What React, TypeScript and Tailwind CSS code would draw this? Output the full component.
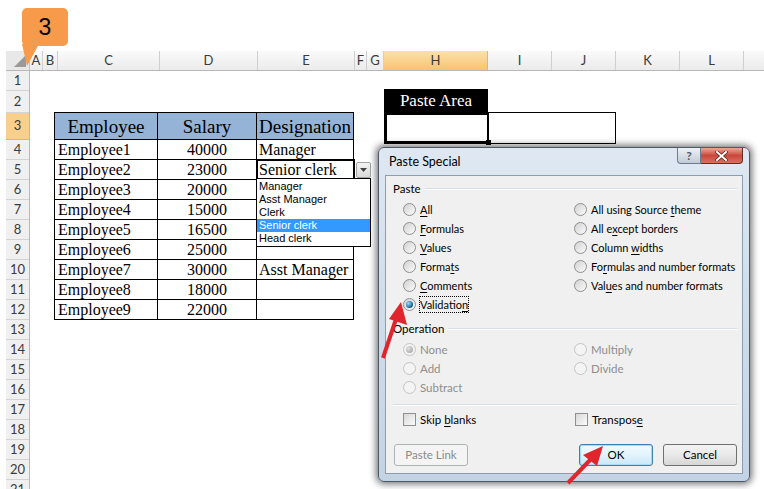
import React from "react";

const COLS = [
  { n: "A", w: "w-[13px]" },
  { n: "B", w: "w-[15px]" },
  { n: "C", w: "w-[102px]" },
  { n: "D", w: "w-[98px]" },
  { n: "E", w: "w-[97px]" },
  { n: "F", w: "w-[12px]" },
  { n: "G", w: "w-[17px]" },
  { n: "H", w: "w-[104px]", active: true },
  { n: "I", w: "w-[64px]" },
  { n: "J", w: "w-[64px]" },
  { n: "K", w: "w-[64px]" },
  { n: "L", w: "w-[64px]" },
  { n: "", w: "w-[64px]" }, // M lies past the right edge
];

const ROWS = [
  { n: 1, h: "h-[20px]" },
  { n: 2, h: "h-[22px]" },
  { n: 3, h: "h-[27px]", active: true },
  ...Array.from({ length: 18 }, (_, i) => ({ n: i + 4, h: "h-[20px]", active: false })),
];

const EMPLOYEES = [
  { name: "Employee1", salary: "40000", role: "Manager" },
  { name: "Employee2", salary: "23000", role: "Senior clerk", selected: true },
  { name: "Employee3", salary: "20000", role: "" },
  { name: "Employee4", salary: "15000", role: "" },
  { name: "Employee5", salary: "16500", role: "" },
  { name: "Employee6", salary: "25000", role: "" },
  { name: "Employee7", salary: "30000", role: "Asst Manager" },
  { name: "Employee8", salary: "18000", role: "" },
  { name: "Employee9", salary: "22000", role: "" },
];

const LIST = ["Manager", "Asst Manager", "Clerk", "Senior clerk", "Head clerk"];

function Radio({ checked, disabled }: { checked?: boolean; disabled?: boolean }) {
  return (
    <span
      className={`flex h-[13px] w-[13px] shrink-0 items-center justify-center rounded-full border ${
        disabled
          ? "border-[#c4c4c4] bg-[#f4f4f4]"
          : "border-[#8f8f8f] bg-linear-to-br from-[#d2d2d2] to-[#fbfbfb]"
      }`}
    >
      {checked && (
        <span
          className={`h-[7px] w-[7px] rounded-full ${
            disabled
              ? "bg-[radial-gradient(circle_at_35%_35%,#e2e2e2,#9a9a9a)]"
              : "bg-[radial-gradient(circle_at_35%_35%,#9fdcff,#0d5d8f_70%)]"
          }`}
        />
      )}
    </span>
  );
}

function Check() {
  return <span className="h-[13px] w-[13px] shrink-0 border border-[#8f8f8f] bg-linear-to-br from-[#d8d8d8] to-[#fbfbfb]" />;
}

// label with one underlined access key
function Label({ text, k, disabled, focus }: { text: string; k?: number; disabled?: boolean; focus?: boolean }) {
  const body =
    k === undefined ? (
      text
    ) : (
      <>
        {text.slice(0, k)}
        <u className="underline-offset-2">{text[k]}</u>
        {text.slice(k + 1)}
      </>
    );
  return (
    <span
      className={`whitespace-nowrap ${disabled ? "text-[#8e8e8e]" : "text-black"} ${
        focus ? "outline-1 outline-dotted outline-black" : ""
      } leading-[15px]`}
    >
      {body}
    </span>
  );
}

function Opt({
  text,
  k,
  checked,
  disabled,
  focus,
}: {
  text: string;
  k?: number;
  checked?: boolean;
  disabled?: boolean;
  focus?: boolean;
}) {
  return (
    <div className="flex h-[19px] items-center gap-[4px]">
      <Radio checked={checked} disabled={disabled} />
      <Label text={text} k={k} disabled={disabled} focus={focus} />
    </div>
  );
}

function Legend({ text }: { text: string }) {
  return (
    <div className="flex h-[14px] items-center pl-[7px] pr-[5px]">
      <span className="leading-[14px]">{text}</span>
      <span className="ml-[4px] h-[2px] flex-1 border-t border-b border-t-[#d5dfe5] border-b-white" />
    </div>
  );
}

function PasteSpecial() {
  return (
    <div className="absolute left-[378px] top-[147px] flex h-[335px] w-[372px] flex-col rounded-[6px] border border-[#4b5866] bg-linear-to-b from-[#dfe8f2] via-[#cfdcea] to-[#c4d3e4] shadow-[0_0_7px_2px_rgba(0,0,0,0.55)] font-['Lato','Noto_Sans',sans-serif] text-[11px]">
      <div className="relative flex h-[27px] items-center pl-[10px] pt-[2px] text-[12.5px] text-black">
        Paste Special
        <div className="absolute right-[6px] top-0 flex">
          <div className="flex h-[16px] w-[24px] items-center justify-center rounded-bl-[4px] border border-t-0 border-[#6d7b8b] bg-linear-to-b from-[#eef2f6] via-[#d7dee6] to-[#c2ccd8] text-[12px] font-bold leading-none text-[#4f5a66]">
            ?
          </div>
          <div className="flex h-[16px] w-[42px] items-center justify-center rounded-br-[4px] border border-l-0 border-t-0 border-[#6b2b25] bg-linear-to-b from-[#e9a799] via-[#c9473b] to-[#d9715d]">
            <svg width="13" height="10" viewBox="0 0 13 10">
              <path d="M2 1 L11 9 M11 1 L2 9" stroke="#5a1e19" strokeWidth="3.4" strokeLinecap="square" />
              <path d="M2 1 L11 9 M11 1 L2 9" stroke="#ffffff" strokeWidth="2" strokeLinecap="square" />
            </svg>
          </div>
        </div>
      </div>
      <div className="mx-[6px] flex h-[299px] flex-col border border-[#8d9cb0] bg-[#f0f0f0] pt-[6px] text-[11.5px]">
        <Legend text="Paste" />
        <div className="mt-[4px] grid grid-cols-[171px_1fr] pl-[17px] text-[11px]">
          <div>
            <Opt text="All" k={0} />
            <Opt text="Formulas" k={0} />
            <Opt text="Values" k={0} />
            <Opt text="Formats" k={5} />
            <Opt text="Comments" k={0} />
            <Opt text="Validation" k={9} checked focus />
          </div>
          <div>
            <Opt text="All using Source theme" k={17} />
            <Opt text="All except borders" k={5} />
            <Opt text="Column widths" k={7} />
            <Opt text="Formulas and number formats" k={2} />
            <Opt text="Values and number formats" k={3} />
          </div>
        </div>
        <div className="mt-[8px]">
          <Legend text="Operation" />
        </div>
        <div className="mt-[4px] grid grid-cols-[171px_1fr] pl-[17px]">
          <div>
            <Opt text="None" checked disabled />
            <Opt text="Add" disabled />
            <Opt text="Subtract" disabled />
          </div>
          <div>
            <Opt text="Multiply" disabled />
            <Opt text="Divide" disabled />
          </div>
        </div>
        <div className="ml-[7px] mr-[5px] mt-[7px] h-[2px] border-t border-b border-t-[#d5dfe5] border-b-white" />
        <div className="mt-[4px] grid h-[18px] grid-cols-[171px_1fr] items-center pl-[17px]">
          <div className="flex items-center gap-[4px]">
            <Check />
            <Label text="Skip blanks" k={5} />
          </div>
          <div className="flex items-center gap-[4px] pl-[1px]">
            <Check />
            <Label text="Transpose" k={8} />
          </div>
        </div>
        <div className="mt-[16px] flex h-[22px] pl-[8px]">
          <div className="flex w-[74px] items-center justify-center rounded-[3px] border border-[#adb2b5] bg-[#f4f4f4] text-[#8b8b8b]">
            Paste Link
          </div>
          <div className="ml-[111px] flex w-[74px] items-center justify-center rounded-[3px] border border-[#3c7fb1] bg-linear-to-b from-[#f2f9fd] via-[#e3f3fc] to-[#c9e8f9] shadow-[inset_0_0_0_1px_#a6dbf7]">
            OK
          </div>
          <div className="ml-[10px] flex w-[74px] items-center justify-center rounded-[3px] border border-[#707070] bg-linear-to-b from-[#f3f3f3] via-[#e9e9e9] to-[#d6d6d6]">
            Cancel
          </div>
        </div>
      </div>
    </div>
  );
}

export default function App() {
  return (
    <div className="relative h-[489px] w-[764px] overflow-hidden bg-white font-['Lato','Liberation_Sans',sans-serif]">
      {/* callout badge */}
      <div className="h-[51px] pl-[22px] pt-[8px]">
        <div className="flex h-[38px] w-[46px] items-center justify-center rounded-[5px] bg-[#f79a4a] text-[23px] leading-none text-black font-['Liberation_Sans',sans-serif]">
          3
        </div>
      </div>

      {/* column headers */}
      <div className="ml-[6px] flex h-[20px] border-b border-[#b8b8b8] text-[13px] text-[#3a3a3a]">
        <div className="relative w-[24px] shrink-0 border-r border-[#c6c6c6] bg-[#e8e8e8]">
          <svg className="absolute bottom-[3px] right-[3px]" width="12" height="12" viewBox="0 0 12 12">
            <path d="M12 0 L12 12 L0 12 Z" fill="#9a9a9a" />
          </svg>
        </div>
        {COLS.map((c, i) => (
          <div
            key={i}
            className={`${c.w} flex shrink-0 items-center justify-center border-r ${
              c.active
                ? "border-[#f2b15b] bg-linear-to-b from-[#fbe1a9] to-[#f6c46f]"
                : "border-[#cfcfcf] bg-linear-to-b from-[#fafafa] to-[#ebebeb]"
            }`}
          >
            {c.n}
          </div>
        ))}
      </div>

      <div className="flex">
        {/* row headers */}
        <div className="ml-[6px] w-[24px] shrink-0 border-r border-[#b8b8b8] text-[13px] text-[#3a3a3a]">
          {ROWS.map((r) => (
            <div
              key={r.n}
              className={`${r.h} flex items-center justify-center border-b ${
                r.active ? "border-[#f2b15b] bg-[#f9cf8d]" : "border-[#d3d3d3] bg-[#f0f0f0]"
              }`}
            >
              {r.n}
            </div>
          ))}
        </div>

        {/* sheet content */}
        <div className="flex flex-1 items-start pt-[18px] font-['Liberation_Serif',serif]">
          <div className="ml-[24px] mt-[23px] w-[300px] border-l border-t border-black text-[16px] leading-[19px] text-black">
            <div className="flex bg-[#95b3d7] text-[19px]">
              <div className="flex h-[27px] w-[103px] items-center justify-center border-b border-r border-black">Employee</div>
              <div className="flex h-[27px] w-[99px] items-center justify-center border-b border-r border-black">Salary</div>
              <div className="flex h-[27px] w-[97px] items-center justify-center border-b border-r border-black">Designation</div>
            </div>
            {EMPLOYEES.map((e) => (
              <div key={e.name} className="flex">
                <div className="flex h-[20px] w-[103px] items-center border-b border-r border-black pl-[3px]">{e.name}</div>
                <div className="flex h-[20px] w-[99px] items-center justify-center border-b border-r border-black">{e.salary}</div>
                <div
                  className={`flex h-[20px] w-[97px] items-center border-b border-r border-black pl-[2px] ${
                    e.selected ? "outline-2 -outline-offset-1 outline-black" : ""
                  }`}
                >
                  {e.role}
                </div>
              </div>
            ))}
          </div>

          <div className="ml-[30px]">
            <div className="flex h-[23px] w-[104px] items-center justify-center bg-black text-[17px] text-white">Paste Area</div>
            <div className="h-[32px] w-[232px] border border-black">
              <div className="relative h-full w-[104px] border-2 border-black">
                <span className="absolute -bottom-[4px] -right-[4px] h-[5px] w-[5px] bg-black" />
              </div>
            </div>
          </div>
        </div>
      </div>

      {/* validation dropdown */}
      <div className="absolute left-[356px] top-[162px] flex h-[16px] w-[15px] items-center justify-center rounded-[2px] border border-[#a3a3a3] bg-linear-to-b from-[#f4f4f4] to-[#d9d9d9]">
        <svg width="7" height="4" viewBox="0 0 7 4">
          <path d="M0 0 L7 0 L3.5 4 Z" fill="#444" />
        </svg>
      </div>
      <div className="absolute left-[256px] top-[178px] w-[115px] border border-black bg-white py-[1px] font-['Liberation_Sans',sans-serif] text-[11px] leading-[13px] text-black">
        {LIST.map((l) => (
          <div key={l} className={`h-[13px] pl-[2px] ${l === "Senior clerk" ? "bg-[#3399ff] text-white" : ""}`}>
            {l}
          </div>
        ))}
      </div>

      <PasteSpecial />

      {/* callout tail and red arrows */}
      <svg className="pointer-events-none absolute left-0 top-0" width="764" height="489" viewBox="0 0 764 489">
        <path d="M22 44 L39 44 L27 66 Z" fill="#f79a4a" />
        <path d="M383 358 L396 319" stroke="#e1252c" strokeWidth="4" />
        <path d="M401 302 L407 325 L389 319 Z" fill="#e1252c" />
        <path d="M568 483 L591 459" stroke="#e1252c" strokeWidth="4" />
        <path d="M603 446 L597 466 L583 455 Z" fill="#e1252c" />
      </svg>
    </div>
  );
}
